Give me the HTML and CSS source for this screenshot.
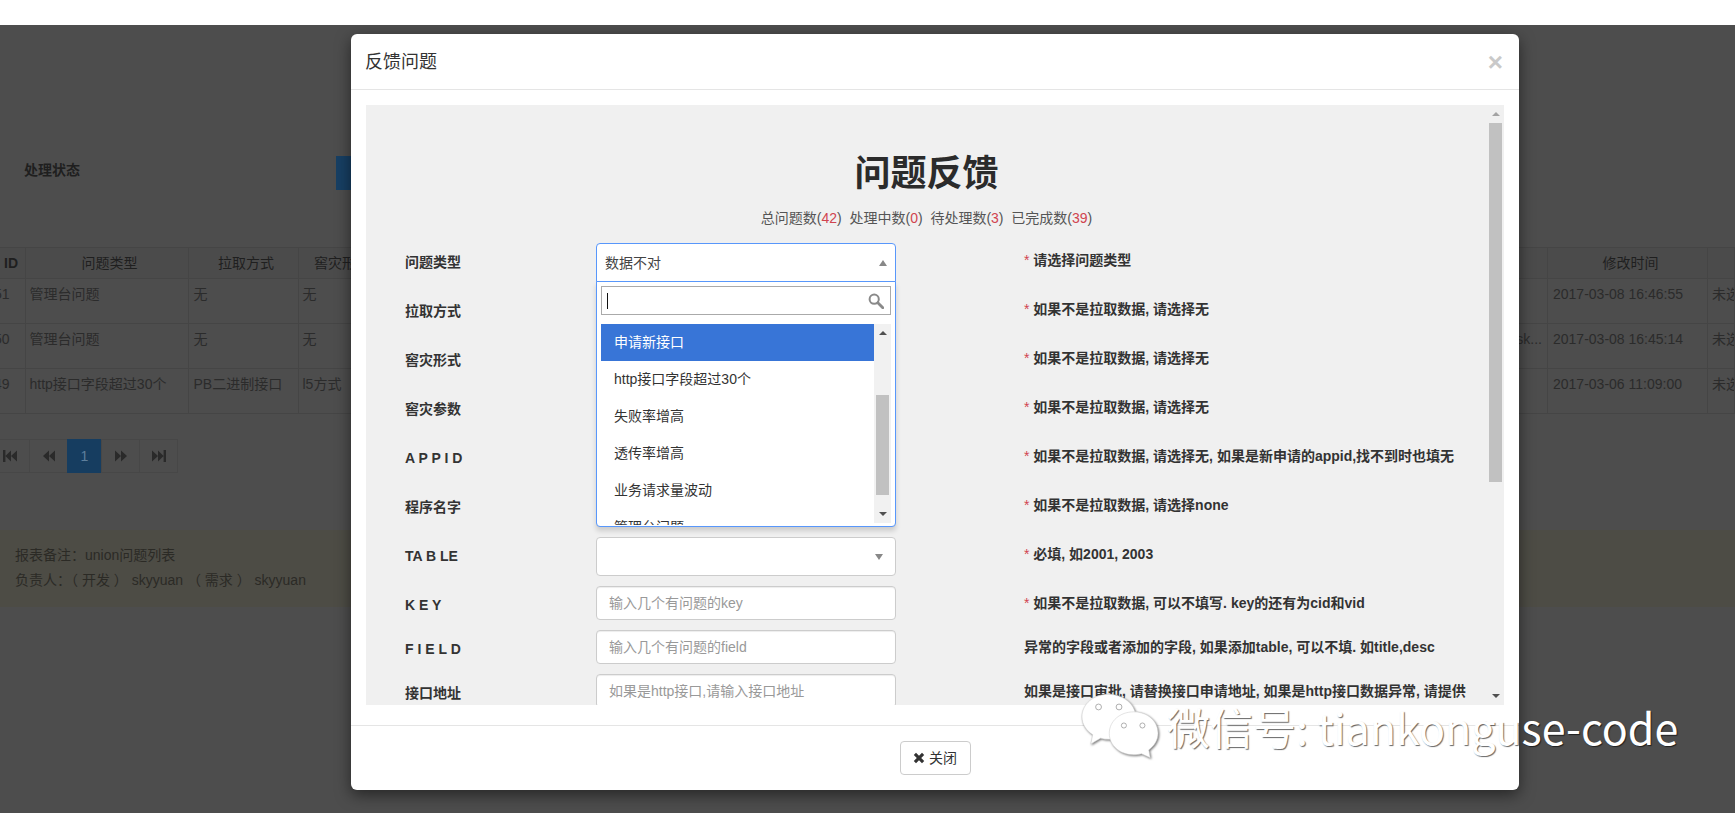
FILE: index.html
```html
<!DOCTYPE html>
<html lang="zh-CN">
<head>
<meta charset="utf-8">
<title>反馈问题</title>
<link rel="stylesheet" href="styles.css">
</head>
<body>
<header class="topbar"></header>
<main class="page">
  <section class="filter">
    <span class="filter-label">处理状态</span>
    <span class="filter-btn"></span>
  </section>
  <table class="grid">
    <colgroup>
      <col class="c-id"><col class="c-type"><col class="c-pull"><col class="c-form"><col><col class="c-task"><col class="c-time"><col class="c-state">
    </colgroup>
    <thead>
      <tr><th class="th-id">ID</th><th>问题类型</th><th>拉取方式</th><th>窖灾形式</th><th></th><th></th><th>修改时间</th><th></th></tr>
    </thead>
    <tbody>
      <tr><td class="td-id">51</td><td>管理台问题</td><td class="td-pad">无</td><td>无</td><td></td><td></td><td class="td-pad">2017-03-08 16:46:55</td><td>未选</td></tr>
      <tr><td class="td-id">50</td><td>管理台问题</td><td class="td-pad">无</td><td>无</td><td></td><td class="td-task">task...</td><td class="td-pad">2017-03-08 16:45:14</td><td>未选</td></tr>
      <tr><td class="td-id">49</td><td>http接口字段超过30个</td><td class="td-pad">PB二进制接口</td><td>l5方式</td><td></td><td></td><td class="td-pad">2017-03-06 11:09:00</td><td>未选</td></tr>
    </tbody>
  </table>
  <nav class="pager">
    <span class="pg pg-first"><svg class="pg-ico" viewBox="0 0 14 14"><path d="M0 1h2.400v12H0zM2.400 7 8 1.500v11zM8 7l6-5.500v11z"/></svg></span>
    <span class="pg pg-wide"><svg class="pg-ico" viewBox="0 0 14 14"><path d="M1 7 7 1.500v11zM7 7l6-5.500v11z"/></svg></span>
    <span class="pg pg-active">1</span>
    <span class="pg pg-wide"><svg class="pg-ico" viewBox="0 0 14 14"><path d="M13 7 7 1.500v11zM7 7 1 1.500v11z"/></svg></span>
    <span class="pg pg-wide"><svg class="pg-ico" viewBox="0 0 14 14"><path d="M14 1h-2.400v12H14zM11.600 7 6 1.500v11zM6 7 0 1.500v11z"/></svg></span>
  </nav>
  <aside class="notice">
    <p>报表备注：union问题列表</p>
    <p>负责人：（ 开发 ） skyyuan （ 需求 ） skyyuan</p>
  </aside>

  <div class="modal">
    <div class="modal-head">
      <h4 class="modal-title">反馈问题</h4>
      <span class="modal-x">×</span>
    </div>
    <div class="modal-body">
      <div class="frame">
        <form class="sheet">
          <h1 class="sheet-title">问题反馈</h1>
          <p class="stats">总问题数(<em>42</em>) &nbsp;处理中数(<em>0</em>) &nbsp;待处理数(<em>3</em>) &nbsp;已完成数(<em>39</em>)</p>

          <div class="row">
            <label class="lbl">问题类型</label>
            <div class="field">
              <div class="sel sel-open"><span>数据不对</span><i class="caret caret-up"></i></div>
              <div class="drop">
                <div class="search">
                  <i class="cursor"></i>
                  <svg class="search-ico" viewBox="0 0 16 16"><circle cx="6.200" cy="6.200" r="4.600" fill="none" stroke="#8a8a8a" stroke-width="2"/><path d="m9.800 9.800 5 5" stroke="#8a8a8a" stroke-width="2.800" stroke-linecap="round"/></svg>
                </div>
                <div class="listbox">
                  <ul class="opts">
                    <li class="opt opt-on">申请新接口</li>
                    <li class="opt">http接口字段超过30个</li>
                    <li class="opt">失败率增高</li>
                    <li class="opt">透传率增高</li>
                    <li class="opt">业务请求量波动</li>
                    <li class="opt">管理台问题</li>
                  </ul>
                  <div class="sb sb-small">
                    <i class="arrow arrow-up"></i>
                    <div class="sb-track sb-track-small"><b class="sb-thumb sb-thumb-small"></b></div>
                    <i class="arrow arrow-down"></i>
                  </div>
                </div>
              </div>
            </div>
            <p class="note note-sel"><s>*</s> 请选择问题类型</p>
          </div>

          <div class="row"><label class="lbl">拉取方式</label><div class="field"><div class="sel"></div></div><p class="note note-sel"><s>*</s> 如果不是拉取数据, 请选择无</p></div>
          <div class="row"><label class="lbl">窖灾形式</label><div class="field"><div class="sel"></div></div><p class="note note-sel"><s>*</s> 如果不是拉取数据, 请选择无</p></div>
          <div class="row"><label class="lbl">窖灾参数</label><div class="field"><div class="sel"></div></div><p class="note note-sel"><s>*</s> 如果不是拉取数据, 请选择无</p></div>
          <div class="row"><label class="lbl">A P P I D</label><div class="field"><div class="sel"></div></div><p class="note note-sel"><s>*</s> 如果不是拉取数据, 请选择无, 如果是新申请的appid,找不到时也填无</p></div>
          <div class="row"><label class="lbl">程序名字</label><div class="field"><div class="sel"></div></div><p class="note note-sel"><s>*</s> 如果不是拉取数据, 请选择none</p></div>
          <div class="row"><label class="lbl">TA B LE</label><div class="field"><div class="sel"><span></span><i class="caret caret-down"></i></div></div><p class="note note-sel"><s>*</s> 必填, 如2001, 2003</p></div>
          <div class="row"><label class="lbl lbl-in">K E Y</label><div class="field"><input class="inp" placeholder="输入几个有问题的key"></div><p class="note"><s>*</s> 如果不是拉取数据, 可以不填写. key的还有为cid和vid</p></div>
          <div class="row"><label class="lbl lbl-in">F I E L D</label><div class="field"><input class="inp" placeholder="输入几个有问题的field"></div><p class="note">异常的字段或者添加的字段, 如果添加table, 可以不填. 如title,desc</p></div>
          <div class="row"><label class="lbl lbl-in">接口地址</label><div class="field"><input class="inp" placeholder="如果是http接口,请输入接口地址"></div><p class="note">如果是接口审批, 请替换接口申请地址, 如果是http接口数据异常, 请提供</p></div>
        </form>
        <div class="sb sb-main">
          <i class="arrow arrow-up arrow-soft"></i>
          <div class="sb-track"><b class="sb-thumb sb-thumb-main"></b></div>
          <i class="arrow arrow-down"></i>
        </div>
      </div>
    </div>
    <div class="modal-foot">
      <button class="btn" type="button"><svg class="btn-ico" viewBox="0 0 12 12"><path d="M3 .8 6 3.800 9 .8 11.200 3 8.200 6l3 3L9 11.200l-3-3-3 3L.8 9l3-3-3-3z"/></svg>关闭</button>
    </div>
  </div>

  <div class="mark">
    <svg class="mark-ico" viewBox="0 0 80 66">
      <path class="bub" d="M28 1C13 1 1 11 1 24c0 8 4.500 14 11 18.500L10 52l10-6c3 .8 6 1.200 9 1.200 14 0 27-10 27-23.200C56 11 43 1 28 1z"/>
      <circle class="eye" cx="18" cy="14" r="3"/><circle class="eye" cx="39" cy="14" r="3"/>
      <path class="bub" d="M54 19c-14 0-25 9.500-25 22s11 22 25 22c3 0 5.500-.4 8-1l9 4-1.500-8C75 54 79 48 79 41c0-12.500-11-22-25-22z"/>
      <circle class="eye" cx="44" cy="33" r="2.600"/><circle class="eye" cx="63" cy="33" r="2.600"/>
    </svg>
    <span class="mark-text">微信号: tiankonguse-code</span>
  </div>
</main>
</body>
</html>
```
FILE: styles.css
```css
* { box-sizing: border-box; }
html, body { margin: 0; padding: 0; }
body {
  width: 1735px;
  height: 813px;
  overflow: hidden;
  background: #fff;
  font: 14px/20px "Liberation Sans", "Noto Sans CJK SC", sans-serif;
  color: #333;
}
.topbar { height: 25px; background: #fff; }
.page {
  position: relative;
  height: 788px;
  background: #4d4d4d;
  color: #272727;
  overflow: hidden;
}

/* dimmed page */
.filter { display: flex; align-items: center; padding-top: 131px; height: 165px; }
.filter-label { width: 336px; margin-bottom: 6px; padding-left: 24px; font-weight: 700; color: #1f1f1f; }
.filter-btn { width: 90px; height: 34px; background: #173f63; }
.grid {
  width: 1735px;
  margin-top: 57px;
  table-layout: fixed;
  border-collapse: collapse;
}
.c-id { width: 25px; }
.c-type { width: 163px; }
.c-pull { width: 110px; }
.c-form { width: 82px; }
.c-task { width: 60px; }
.c-time { width: 160px; }
.c-state { width: 27px; }
.grid th, .grid td {
  border: 1px solid #454545;
  white-space: nowrap;
  overflow: hidden;
}
.grid th { height: 31px; padding: 0 0 0 6px; font-weight: 400; color: #1f1f1f; text-align: center; background: #4b4b4b; }
.grid td { height: 45px; padding: 5px 5px 5px 4px; vertical-align: top; color: #2b2b2b; }
.grid .td-pad { padding-left: 5px; }
.grid .th-id { padding: 0 0 0 4px; text-align: left; font-weight: 700; }
.grid .td-id { padding: 5px 15px 5px 0; text-align: left; direction: rtl; }
.grid .td-task { text-align: right; }
.grid th:first-child, .grid td:first-child { border-left: 0; }
.pager { display: flex; margin-top: 25px; height: 34px; }
.pg {
  display: flex;
  align-items: center;
  justify-content: center;
  height: 34px;
  border: 1px solid #474747;
  margin-left: -1px;
}
.pg-first { width: 40px; margin-left: -10px; }
.pg-wide { width: 39px; }
.pg-active { width: 35px; background: #163d60; border-color: #163d60; color: #5d7f9c; }
.pg-ico { width: 14px; height: 14px; fill: #2a2a2a; }
.notice { margin-top: 57px; height: 77px; padding: 15px 15px 0; background: #4d4c45; color: #2b2a25; }
.notice p { margin: 0 0 5px; }

/* modal */
.modal {
  position: absolute;
  left: 351px;
  top: 9px;
  width: 1168px;
  height: 756px;
  display: flex;
  flex-direction: column;
  background: #fff;
  border-radius: 6px;
  box-shadow: 0 5px 15px rgba(0, 0, 0, .5);
  color: #333;
}
.modal-head {
  display: flex;
  align-items: center;
  justify-content: space-between;
  height: 56px;
  padding: 0 16px 0 14px;
  border-bottom: 1px solid #e5e5e5;
}
.modal-title { margin: 0; font-size: 18px; font-weight: 400; line-height: 26px; }
.modal-x { font: 700 26px/26px "Liberation Sans", sans-serif; color: #c9c9c9; }
.modal-body { flex: 1; padding: 15px 15px 20px; min-height: 0; }
.frame { display: flex; height: 600px; background: #f0f0f0; overflow: hidden; }
.sheet { flex: 1; min-width: 0; padding-top: 49px; }
.sheet-title { margin: 0; font-size: 36px; line-height: 40px; font-weight: 700; text-align: center; color: #2b2b2b; }
.stats { margin: 14px 0 15px; height: 20px; text-align: center; color: #555; }
.stats em { font-style: normal; color: #d0444f; }

.row { display: flex; align-items: center; margin-bottom: 10px; }
.lbl { width: 230px; padding: 0 0 2px 39px; font-weight: 700; color: #333; }
.lbl-in { padding: 4px 0 0 39px; }
.field { position: relative; width: 300px; }
.note {
  margin: 0 0 0 128px;
  font-weight: 700;
  white-space: nowrap;
  color: #333;
}
.note-sel { padding-bottom: 6px; }
.note s { text-decoration: none; font-weight: 400; color: #d0444f; }

.sel {
  display: flex;
  align-items: center;
  justify-content: space-between;
  height: 39px;
  padding: 0 8px;
  background: #fff;
  border: 1px solid #ccc;
  border-radius: 4px;
  color: #444;
}
.sel-open { border-color: #5897fb; border-radius: 4px 4px 0 0; }
.caret { width: 0; height: 0; border-left: 4px solid transparent; border-right: 4px solid transparent; }
.caret-up { border-bottom: 6px solid #888; }
.caret-down { border-top: 6px solid #888; margin-right: 4px; }
.inp {
  display: block;
  width: 100%;
  height: 34px;
  padding: 6px 12px;
  font: inherit;
  background: #fff;
  border: 1px solid #ccc;
  border-radius: 4px;
  box-shadow: inset 0 1px 1px rgba(0, 0, 0, .075);
}
.inp::placeholder { color: #999; opacity: 1; }

/* open dropdown */
.drop {
  position: absolute;
  z-index: 5;
  left: 0;
  right: 0;
  top: 38px;
  height: 246px;
  padding: 4px;
  background: #fff;
  border: 1px solid #5897fb;
  border-radius: 0 0 4px 4px;
  box-shadow: 0 4px 5px rgba(0, 0, 0, .15);
}
.search {
  display: flex;
  align-items: center;
  justify-content: space-between;
  height: 29px;
  padding: 0 6px 0 5px;
  border: 1px solid #aaa;
}
.cursor { width: 1px; height: 16px; background: #111; }
.search-ico { width: 16px; height: 16px; }
.listbox { display: flex; height: 201px; margin-top: 9px; overflow: hidden; }
.opts { flex: 1; margin: 0; padding: 0; list-style: none; }
.opt { height: 37px; padding: 8px 13px; color: #333; white-space: nowrap; }
.opt-on { color: #fff; background: #3875d7; }

/* scrollbars */
.sb { display: flex; flex-direction: column; align-items: center; width: 17px; background: #f1f1f1; }
.sb-main { background: #f0f0f0; }
.sb-small { height: 199px; }
.sb-track { flex: 1; width: 13px; min-height: 0; }
.sb-thumb { display: block; width: 13px; background: #c1c1c1; }
.sb-thumb-main { height: 359px; }
.sb-thumb-small { height: 100px; margin-top: 53px; }
.arrow { display: block; flex: none; width: 0; height: 0; margin: 7px 0; border-left: 4px solid transparent; border-right: 4px solid transparent; }
.arrow-up { border-bottom: 4px solid #505050; }
.arrow-down { border-top: 4px solid #505050; }
.arrow-soft { border-bottom-color: #a3a3a3; }

.modal-foot { display: flex; justify-content: center; height: 65px; padding-top: 15px; border-top: 1px solid #e5e5e5; }
.btn {
  display: flex;
  align-items: center;
  justify-content: center;
  width: 71px;
  height: 34px;
  padding: 0;
  font: inherit;
  color: #333;
  background: #fff;
  border: 1px solid #ccc;
  border-radius: 4px;
}
.btn-ico { width: 12px; height: 12px; margin-right: 4px; fill: #333; }

/* watermark over everything */
.mark {
  position: absolute;
  z-index: 10;
  left: 1081px;
  top: 668px;
  display: flex;
  align-items: center;
  gap: 8px;
  pointer-events: none;
}
.mark-ico { width: 78px; height: 65px; filter: drop-shadow(1px 1px 1px rgba(0, 0, 0, .55)); }
.bub { fill: #fff; stroke: #d0d0d0; stroke-width: .6; }
.eye { fill: #fff; stroke: #999; stroke-width: .8; }
.mark-text {
  font: 400 43px/50px "Noto Sans CJK SC", "Noto Sans", sans-serif;
  color: #fff;
  white-space: nowrap;
  text-shadow: 1px 1px 1px rgba(0, 0, 0, .6);
}
```
